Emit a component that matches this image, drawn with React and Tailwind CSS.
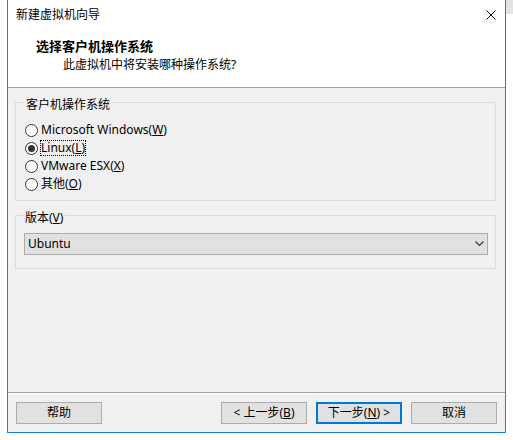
export default function App() {
  const Radio = ({ checked }) => (
    <span className="w-[13px] h-[13px] rounded-full border border-[#333333] bg-white flex items-center justify-center shrink-0">
      {checked && <span className="w-[7px] h-[7px] rounded-full bg-[#333333]" />}
    </span>
  );
  const Btn = ({ children, primary }) => (
    <div
      className={
        "w-[86px] h-[22px] flex items-center justify-center bg-[#e1e1e1] leading-[16px] " +
        (primary ? "border-2 border-[#0078d7]" : "border border-[#adadad]")
      }
    >
      {children}
    </div>
  );
  return (
    <div className="w-[513px] h-[440px] bg-white flex text-[12px] text-black font-['Noto_Sans','Noto_Sans_CJK_SC',sans-serif]">
      <div className="w-[7px] shrink-0" />
      <div className="w-[499px] h-[433px] shrink-0 border-x border-b border-[#1883d7] bg-[#f0f0f0] flex flex-col">
        {/* header */}
        <div className="h-[88px] bg-white border-b border-[#a0a0a0] flex flex-col shrink-0">
          <div className="flex items-center justify-between pl-[8px] pr-[9px] pt-[7px]">
            <span className="leading-[16px]">新建虚拟机向导</span>
            <svg width="10" height="10" viewBox="0 0 10 10" className="mt-[-1px]">
              <path d="M0.5 0.5 L9.5 9.5 M9.5 0.5 L0.5 9.5" stroke="#000" strokeWidth="1" fill="none" />
            </svg>
          </div>
          <div className="pl-[28px] mt-[15px] leading-[16px] text-[13px] font-bold">选择客户机操作系统</div>
          <div className="pl-[55px] mt-[3px] leading-[16px]">此虚拟机中将安装哪种操作系统?</div>
        </div>

        {/* group 1 */}
        <fieldset className="mt-[4px] ml-[7px] mr-[9px] border border-[#dcdcdc] pl-[9px] pt-[9px] pb-[7px]">
          <legend className="ml-[-1px] px-[2px] pt-[6px] leading-[14px]">客户机操作系统</legend>
          <div className="flex flex-col">
            <div className="h-[18px] flex items-center gap-[3px]">
              <Radio />
              <span className="leading-[14px]">
                Microsoft Windows(<span className="underline">W</span>)
              </span>
            </div>
            <div className="h-[18px] flex items-center gap-[2px]">
              <Radio checked />
              <span className="leading-[14px] border border-dotted border-black px-[0px]">
                Linux(<span className="underline">L</span>)
              </span>
            </div>
            <div className="h-[18px] flex items-center gap-[3px]">
              <Radio />
              <span className="leading-[14px]">
                VMware ESX(<span className="underline">X</span>)
              </span>
            </div>
            <div className="h-[18px] flex items-center gap-[3px]">
              <Radio />
              <span className="leading-[14px]">
                其他(<span className="underline">O</span>)
              </span>
            </div>
          </div>
        </fieldset>

        {/* group 2 */}
        <fieldset className="mt-[4px] ml-[7px] mr-[9px] border border-[#dcdcdc] pl-[8px] pr-[7px] pt-[8px] pb-[13px]">
          <legend className="ml-[-1px] px-[2px] pt-[6px] leading-[14px]">
            版本(<span className="underline">V</span>)
          </legend>
          <div className="h-[22px] border border-[#adadad] bg-[#e1e1e1] flex items-center justify-between pl-[3px] pr-[3px]">
            <span className="leading-[16px]">Ubuntu</span>
            <svg width="9" height="6" viewBox="0 0 9 6">
              <path d="M0.5 0.5 L4.5 4.5 L8.5 0.5" stroke="#333" strokeWidth="1.2" fill="none" />
            </svg>
          </div>
        </fieldset>

        <div className="flex-1" />

        {/* footer */}
        <div className="h-[40px] shrink-0 border-t border-[#a0a0a0] flex flex-col">
          <div className="border-t border-white" />
          <div className="mt-[8px] px-[8px] flex items-center">
            <Btn>帮助</Btn>
            <div className="flex-1" />
            <div className="flex gap-[9px]">
              <Btn>
                &lt; 上一步(<span className="underline">B</span>)
              </Btn>
              <Btn primary>
                下一步(<span className="underline">N</span>) &gt;
              </Btn>
              <Btn>取消</Btn>
            </div>
          </div>
        </div>
      </div>
      <div className="w-[7px] shrink-0 flex flex-col">
        <div className="h-[14px] bg-[#e3e3e3]" />
      </div>
    </div>
  );
}
